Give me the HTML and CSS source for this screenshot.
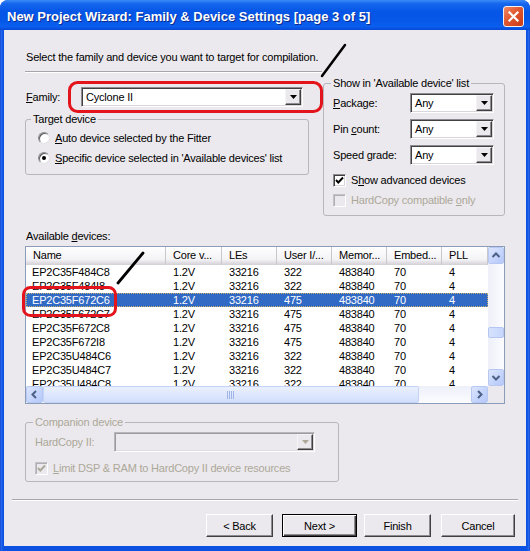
FILE: index.html
```html
<!DOCTYPE html>
<html>
<head>
<meta charset="utf-8">
<title>New Project Wizard</title>
<link rel="stylesheet" href="styles.css">
</head>
<body>
<div class="window">
  <div class="titlebar">
    <span class="title">New Project Wizard: Family &amp; Device Settings [page 3 of 5]</span>
    <span class="close"><svg width="13" height="13" viewBox="0 0 13 13"><path d="M2.5 2.5 L10.5 10.5 M10.5 2.5 L2.5 10.5" stroke="#fff" stroke-width="2.2" stroke-linecap="square"/></svg></span>
  </div>
  <div class="client">
    <div class="top">
      <div class="left">
        <p class="intro">Select the family and device you want to target for compilation.</p>
        <div class="rule"></div>
        <div class="family-row">
          <span class="family-lbl"><u>F</u>amily:</span>
          <div class="combo combo-family">
            <span class="combo-text">Cyclone II</span>
            <span class="drop"><svg width="7" height="4" viewBox="0 0 7 4"><path d="M0 0H7L3.5 4Z" fill="#000"/></svg></span>
          </div>
        </div>
        <fieldset class="group group-target">
          <legend>Target device</legend>
          <div class="target-body">
            <div class="opt"><span class="radio"></span><span><u>A</u>uto device selected by the Fitter</span></div>
            <div class="opt"><span class="radio on"></span><span><u>S</u>pecific device selected in 'Available devices' list</span></div>
          </div>
        </fieldset>
      </div>
      <fieldset class="group group-show">
        <legend>Show in 'Available device' list</legend>
        <div class="show-body">
          <div class="srow">
            <span class="slbl"><u>P</u>ackage:</span>
            <div class="combo combo-small"><span class="combo-text">Any</span><span class="drop"><svg width="7" height="4" viewBox="0 0 7 4"><path d="M0 0H7L3.5 4Z" fill="#000"/></svg></span></div>
          </div>
          <div class="srow">
            <span class="slbl">Pin <u>c</u>ount:</span>
            <div class="combo combo-small"><span class="combo-text">Any</span><span class="drop"><svg width="7" height="4" viewBox="0 0 7 4"><path d="M0 0H7L3.5 4Z" fill="#000"/></svg></span></div>
          </div>
          <div class="srow">
            <span class="slbl">Speed <u>g</u>rade:</span>
            <div class="combo combo-small"><span class="combo-text">Any</span><span class="drop"><svg width="7" height="4" viewBox="0 0 7 4"><path d="M0 0H7L3.5 4Z" fill="#000"/></svg></span></div>
          </div>
          <div class="crow first">
            <span class="check"><svg width="11" height="11" viewBox="0 0 11 11"><path d="M2 5 L4.3 7.5 L9 2.5" stroke="#000" stroke-width="1.9" fill="none"/></svg></span>
            <span>S<u>h</u>ow advanced devices</span>
          </div>
          <div class="crow disabled">
            <span class="check off"></span>
            <span>HardCopy compatible <u>o</u>nly</span>
          </div>
        </div>
      </fieldset>
    </div>

    <div class="avail-lbl">Available <u>d</u>evices:</div>
    <div class="list">
      <div class="table">
        <div class="thead">
          <span>Name</span><span>Core v...</span><span>LEs</span><span>User I/...</span><span>Memor...</span><span>Embed...</span><span>PLL</span>
        </div>
        <div class="trow"><span>EP2C35F484C8</span><span>1.2V</span><span>33216</span><span>322</span><span>483840</span><span>70</span><span>4</span></div>
        <div class="trow"><span>EP2C35F484I8</span><span>1.2V</span><span>33216</span><span>322</span><span>483840</span><span>70</span><span>4</span></div>
        <div class="trow sel"><span>EP2C35F672C6</span><span>1.2V</span><span>33216</span><span>475</span><span>483840</span><span>70</span><span>4</span></div>
        <div class="trow"><span>EP2C35F672C7</span><span>1.2V</span><span>33216</span><span>475</span><span>483840</span><span>70</span><span>4</span></div>
        <div class="trow"><span>EP2C35F672C8</span><span>1.2V</span><span>33216</span><span>475</span><span>483840</span><span>70</span><span>4</span></div>
        <div class="trow"><span>EP2C35F672I8</span><span>1.2V</span><span>33216</span><span>475</span><span>483840</span><span>70</span><span>4</span></div>
        <div class="trow"><span>EP2C35U484C6</span><span>1.2V</span><span>33216</span><span>322</span><span>483840</span><span>70</span><span>4</span></div>
        <div class="trow"><span>EP2C35U484C7</span><span>1.2V</span><span>33216</span><span>322</span><span>483840</span><span>70</span><span>4</span></div>
        <div class="trow"><span>EP2C35U484C8</span><span>1.2V</span><span>33216</span><span>322</span><span>483840</span><span>70</span><span>4</span></div>
      </div>
      <div class="vscroll">
        <span class="sbtn"><svg width="14" height="15" viewBox="0 0 14 15"><path d="M3.5 9 L7 5.5 L10.5 9" stroke="#4D6185" stroke-width="2" fill="none"/></svg></span>
        <div class="vtrack"><span class="vthumb"></span></div>
        <span class="sbtn"><svg width="14" height="15" viewBox="0 0 14 15"><path d="M3.5 6 L7 9.5 L10.5 6" stroke="#4D6185" stroke-width="2" fill="none"/></svg></span>
      </div>
      <div class="hscroll">
        <span class="sbtn"><svg width="15" height="15" viewBox="0 0 15 15"><path d="M9 4 L5.5 7.5 L9 11" stroke="#4D6185" stroke-width="2" fill="none"/></svg></span>
        <div class="htrack"><span class="hthumb"><svg width="8" height="8" viewBox="0 0 8 8"><path d="M0.5 0V8M2.5 0V8M4.5 0V8M6.5 0V8" stroke="#9FB4E8" stroke-width="1"/></svg></span></div>
        <span class="sbtn"><svg width="15" height="15" viewBox="0 0 15 15"><path d="M6 4 L9.5 7.5 L6 11" stroke="#4D6185" stroke-width="2" fill="none"/></svg></span>
      </div>
      <div class="corner"></div>
    </div>

    <fieldset class="group group-comp">
      <legend>Companion device</legend>
      <div class="comp-body">
        <div class="srow">
          <span class="clbl">HardCopy II:</span>
          <div class="combo combo-comp"><span class="combo-text"></span><span class="drop"><svg width="7" height="4" viewBox="0 0 7 4"><path d="M0 0H7L3.5 4Z" fill="#ACA899"/></svg></span></div>
        </div>
        <div class="crow disabled">
          <span class="check off"><svg width="11" height="11" viewBox="0 0 11 11"><path d="M2 5 L4.3 7.5 L9 2.5" stroke="#ACA899" stroke-width="1.9" fill="none"/></svg></span>
          <span><u>L</u>imit DSP &amp; RAM to HardCopy II device resources</span>
        </div>
      </div>
    </fieldset>

    <div class="rule bottom-rule"></div>

    <div class="buttons">
      <span class="btn btn-back">&lt; Back</span>
      <span class="btn btn-next">Next &gt;</span>
      <span class="btn btn-finish">Finish</span>
      <span class="btn btn-cancel">Cancel</span>
    </div>
  </div>

  <svg class="annot" width="530" height="551" viewBox="0 0 530 551">
    <rect x="69.5" y="82.5" width="252" height="29" rx="8" fill="none" stroke="#E3141B" stroke-width="3"/>
    <rect x="23.5" y="287.5" width="92" height="28" rx="7" fill="none" stroke="#E3141B" stroke-width="3"/>
    <path d="M345 45 L322 76" stroke="#000" stroke-width="2.5" stroke-linecap="round"/>
    <path d="M143 253 L118 283" stroke="#000" stroke-width="2.8" stroke-linecap="round"/>
  </svg>
</div>
</body>
</html>
```

FILE: styles.css
```css
* { box-sizing: border-box; }

html, body {
  margin: 0;
  padding: 0;
}

body {
  width: 530px;
  height: 551px;
  overflow: hidden;
  background: #fff;
  font-family: "Liberation Sans", Arial, sans-serif;
  font-size: 11px;
  letter-spacing: -0.2px;
  color: #000;
}

.window {
  position: relative;
  width: 530px;
  height: 551px;
  display: flex;
  flex-direction: column;
  background: linear-gradient(to right, #0A3CC6 0, #2C6CF0 1px, #0B52E2 3px, #0B52E2 calc(100% - 3px), #2C6CF0 calc(100% - 1px), #0A3CC6 100%);
  border-radius: 8px 8px 0 0;
}

.titlebar {
  height: 30px;
  flex: none;
  display: flex;
  align-items: center;
  padding: 2px 0 0 7px;
  border-radius: 8px 8px 0 0;
  background: linear-gradient(to bottom, #3B8BF8 0%, #1667EE 12%, #0555E6 40%, #0658E8 70%, #0A5FEF 88%, #0649D6 100%);
}

.title {
  color: #fff;
  font-weight: bold;
  font-size: 13px;
  letter-spacing: 0;
  text-shadow: 1px 1px 0 #0C2A8A;
  white-space: nowrap;
}

.close {
  margin-left: auto;
  margin-right: 6px;
  width: 21px;
  height: 21px;
  border: 1px solid #F4F1F0;
  border-radius: 3px;
  background: linear-gradient(135deg, #F08A67 0%, #E1572F 45%, #CB3A14 100%);
  display: flex;
  align-items: center;
  justify-content: center;
}

.client {
  flex: 1;
  margin: 0 4px 5px 4px;
  background: #EBE9ED;
  padding: 20px 11px 0 21px;
  display: flex;
  flex-direction: column;
}

u { text-decoration: underline; text-underline-offset: 1px; }

.top {
  display: flex;
  align-items: flex-start;
}

.left {
  width: 298px;
  flex: none;
}

.intro {
  margin: 0;
  padding-left: 1px;
  line-height: 14px;
  white-space: nowrap;
}

.rule {
  height: 2px;
  border-top: 1px solid #A7A5AA;
  border-bottom: 1px solid #FFFFFF;
}

.left .rule {
  margin-top: 7px;
  width: 297px;
}

.family-row {
  margin-top: 14px;
  height: 20px;
  display: flex;
  align-items: center;
}

.family-lbl {
  width: 56px;
  padding-left: 1px;
}

.combo {
  height: 20px;
  background: #fff;
  border: 1px solid;
  border-color: #8E8C90 #FFFFFF #FFFFFF #8E8C90;
  box-shadow: inset 1px 1px 0 #404040, inset -1px -1px 0 #D8D6DA;
  display: flex;
  align-items: center;
  padding: 1px 1px 1px 4px;
}

.combo-text {
  flex: 1;
  white-space: nowrap;
}

.drop {
  width: 16px;
  height: 16px;
  background: #EBE9ED;
  border: 1px solid;
  border-color: #F4F3F5 #404040 #404040 #F4F3F5;
  box-shadow: inset -1px -1px 0 #8E8C90;
  display: flex;
  align-items: center;
  justify-content: center;
  padding-bottom: 1px;
}

.combo-family { width: 222px; }
.combo-small { width: 84px; }

.group {
  margin: 0;
  padding: 0;
  border: 1px solid #B8B5BB;
  border-radius: 3px;
  min-width: 0;
}

.group legend {
  padding: 0 2px;
  margin-left: 5px;
  line-height: 14px;
}

.group-target {
  margin-top: 5px;
  width: 284px;
}

.target-body {
  padding: 2px 0 6px 12px;
}

.opt {
  height: 20px;
  display: flex;
  align-items: center;
  gap: 5px;
  white-space: nowrap;
}

.radio {
  position: relative;
  width: 12px;
  height: 12px;
  border-radius: 50%;
  background: #fff;
  border: 1px solid;
  border-color: #8E8C90 #E4E2E6 #E4E2E6 #8E8C90;
  box-shadow: inset 1px 1px 0 #5A595C;
}

.radio.on::after {
  content: "";
  position: absolute;
  left: 3px;
  top: 3px;
  width: 4px;
  height: 4px;
  border-radius: 50%;
  background: #000;
}

.group-show {
  width: 182px;
  margin-top: 26px;
}

.group-show legend {
  margin-left: 7px;
}

.show-body {
  padding: 3px 0 5px 9px;
}

.srow {
  height: 20px;
  display: flex;
  align-items: center;
  white-space: nowrap;
}

.srow + .srow { margin-top: 6px; }

.slbl { width: 77px; }

.crow {
  height: 20px;
  display: flex;
  align-items: center;
  gap: 5px;
  white-space: nowrap;
}

.crow.first { margin-top: 5px; }

.check {
  width: 13px;
  height: 13px;
  background: #fff;
  border: 1px solid;
  border-color: #8E8C90 #FFFFFF #FFFFFF #8E8C90;
  box-shadow: inset 1px 1px 0 #404040, inset -1px -1px 0 #D8D6DA;
  display: flex;
  align-items: center;
  justify-content: center;
}

.check.off {
  background: #EBE9ED;
  border-color: #C4C2C6 #FFFFFF #FFFFFF #C4C2C6;
  box-shadow: inset 1px 1px 0 #B0AEB2;
}

.disabled { color: #ACA899; }

.avail-lbl {
  margin-top: 13px;
  line-height: 14px;
  padding-left: 1px;
}

.list {
  margin-top: 3px;
  width: 480px;
  height: 158px;
  border: 1px solid #8A9DB8;
  background: #fff;
  display: grid;
  grid-template-columns: 462px 16px;
  grid-template-rows: 139px 17px;
}

.table {
  overflow: hidden;
}

.thead, .trow {
  display: grid;
  grid-template-columns: 140px 56px 55px 55px 55px 55px 46px;
  white-space: nowrap;
}

.thead {
  height: 18px;
  background: linear-gradient(to bottom, #FFFFFF 0%, #F3F2F5 70%, #E3E1E6 85%, #D2D0D5 100%);
}

.thead span {
  padding-left: 7px;
  line-height: 17px;
  border-right: 1px solid #C9C7CC;
  overflow: hidden;
}

.trow {
  height: 14px;
  line-height: 14px;
}

.trow span {
  padding-left: 7px;
  overflow: hidden;
}

.trow span:first-child { padding-left: 6px; }

.trow.sel {
  background: #316AC5;
  color: #fff;
  outline: 1px dotted #C9B06E;
  outline-offset: -1px;
}

.vscroll {
  display: flex;
  flex-direction: column;
  background: linear-gradient(to right, #EEF0F9, #FCFCFF);
}

.hscroll {
  display: flex;
  background: linear-gradient(to bottom, #EEF0F9, #FCFCFF);
}

.sbtn {
  flex: none;
  width: 16px;
  height: 17px;
  border: 1px solid #B7C8F2;
  border-radius: 2px;
  background: linear-gradient(135deg, #DCE6FD 0%, #C3D3FC 60%, #B5C8F8 100%);
  display: flex;
  align-items: center;
  justify-content: center;
}

.hscroll .sbtn {
  width: 17px;
  height: 17px;
}

.vtrack {
  flex: 1;
  padding-top: 63px;
}

.vthumb {
  display: block;
  height: 11px;
  border: 1px solid #B4C6F1;
  border-radius: 2px;
  background: linear-gradient(to right, #D6E2FD, #C6D6FB);
}

.htrack {
  flex: 1;
  display: flex;
}

.hthumb {
  width: 376px;
  height: 17px;
  border: 1px solid #C3D2F5;
  border-radius: 2px;
  background: linear-gradient(to bottom, #EAF0FE, #D2DEFC);
  display: flex;
  align-items: center;
  justify-content: center;
}

.corner { background: #EBE9ED; }

.group-comp {
  margin-top: 11px;
  width: 314px;
  color: #ACA899;
}

.group-comp legend {
  margin-left: 7px;
}

.comp-body {
  padding: 3px 0 3px 9px;
}

.clbl { width: 79px; }

.combo-comp {
  width: 201px;
  background: #EBE9ED;
  border-color: #B8B6BA #FFFFFF #FFFFFF #B8B6BA;
  box-shadow: inset 1px 1px 0 #9C9AA0, inset -1px -1px 0 #DEDCE0;
}

.group-comp .crow { margin-top: 6px; }

.bottom-rule {
  margin: 17px 0 0 -13px;
  width: 506px;
}

.buttons {
  margin-top: 13px;
  display: flex;
  justify-content: flex-end;
}

.btn {
  height: 23px;
  display: flex;
  align-items: center;
  justify-content: center;
  background: #EBE9ED;
  border: 1px solid;
  border-color: #FFFFFF #404040 #404040 #FFFFFF;
  box-shadow: inset -1px -1px 0 #8E8C90;
}

.btn-back { width: 67px; }
.btn-next {
  width: 75px;
  margin-left: 9px;
  border-color: #000;
  box-shadow: inset 1px 1px 0 #FFFFFF, inset -1px -1px 0 #404040, inset -2px -2px 0 #8E8C90;
}
.btn-finish { width: 67px; margin-left: 7px; }
.btn-cancel { width: 74px; margin-left: 10px; }

.annot {
  position: absolute;
  left: 0;
  top: 0;
  pointer-events: none;
}
```
